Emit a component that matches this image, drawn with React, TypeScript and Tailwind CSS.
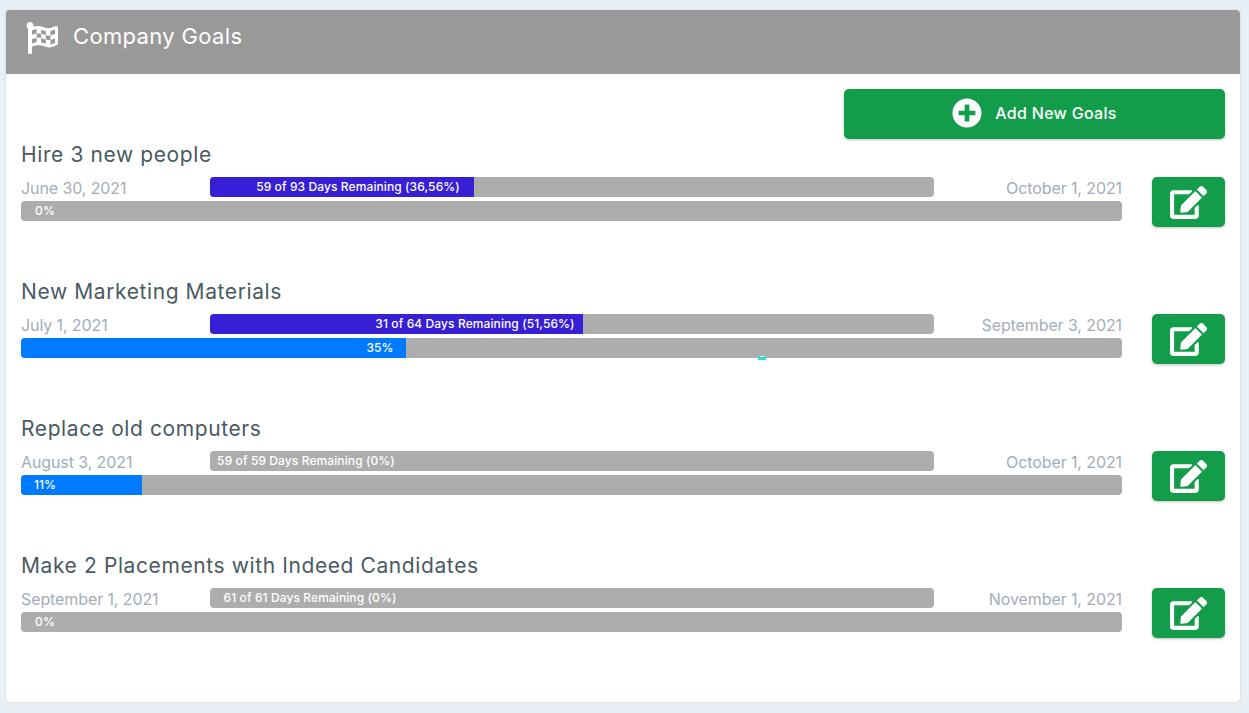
import { FaEdit, FaFlagCheckered, FaPlusCircle } from "react-icons/fa";

type Goal = {
  title: string;
  start: string;
  end: string;
  days: string;
  daysWidth: number;
  daysCenter: number;
  progress: string;
  progressWidth: number;
  progressCenter: number;
  marker?: boolean;
};

const goals: Goal[] = [
  {
    title: "Hire 3 new people",
    start: "June 30, 2021",
    end: "October 1, 2021",
    days: "59 of 93 Days Remaining (36,56%)",
    daysWidth: 264,
    daysCenter: 148,
    progress: "0%",
    progressWidth: 0,
    progressCenter: 24,
  },
  {
    title: "New Marketing Materials",
    start: "July 1, 2021",
    end: "September 3, 2021",
    days: "31 of 64 Days Remaining (51,56%)",
    daysWidth: 373,
    daysCenter: 265,
    progress: "35%",
    progressWidth: 385,
    progressCenter: 359,
    marker: true,
  },
  {
    title: "Replace old computers",
    start: "August 3, 2021",
    end: "October 1, 2021",
    days: "59 of 59 Days Remaining (0%)",
    daysWidth: 0,
    daysCenter: 96,
    progress: "11%",
    progressWidth: 121,
    progressCenter: 24,
  },
  {
    title: "Make 2 Placements with Indeed Candidates",
    start: "September 1, 2021",
    end: "November 1, 2021",
    days: "61 of 61 Days Remaining (0%)",
    daysWidth: 0,
    daysCenter: 100,
    progress: "0%",
    progressWidth: 0,
    progressCenter: 24,
  },
];

// 進捗バー: 塗りとラベルは別要素で、ラベル位置はデータから決める
function Bar({
  fill,
  color,
  label,
  center,
}: {
  fill: number;
  color: string;
  label: string;
  center: number;
}) {
  return (
    <div className="relative h-5 overflow-hidden rounded-[4px] bg-[#adadad]">
      <div className={`h-full ${color}`} style={{ width: fill }} />
      <div
        className="absolute inset-y-0 left-0 flex items-center justify-center whitespace-nowrap text-[12px] font-medium tracking-[0.1px] text-white"
        style={{ width: center * 2 }}
      >
        {label}
      </div>
    </div>
  );
}

function GoalRow({ goal }: { goal: Goal }) {
  return (
    <div className="mb-[51px]">
      <div className="h-9 text-[21px] leading-[28px] tracking-[0.6px] text-[#4a5a62]">{goal.title}</div>
      <div className="flex items-start justify-between">
        <div className="relative w-[1101px]">
          <div className="flex h-5 items-center">
            <div className="w-[189px] pt-0.5 text-[16px] tracking-[-0.1px] text-[#a3adb8]">{goal.start}</div>
            <div className="w-[724px]">
              <Bar fill={goal.daysWidth} color="bg-[#371fd6]" label={goal.days} center={goal.daysCenter} />
            </div>
            <div className="flex-1 pt-0.5 text-right text-[16px] tracking-[-0.1px] text-[#a3adb8]">{goal.end}</div>
          </div>
          <div className="mt-1">
            <Bar fill={goal.progressWidth} color="bg-[#007bff]" label={goal.progress} center={goal.progressCenter} />
          </div>
          {goal.marker && (
            <div className="absolute left-[737px] top-[42px] flex h-1 w-2 justify-center bg-[#2de0d0]">
              <div className="h-px w-1 bg-white" />
            </div>
          )}
        </div>
        <button className="flex h-[50px] w-[73px] items-center justify-center rounded-[5px] bg-[#139c4a] text-white shadow-[0_1px_3px_rgba(0,0,0,0.25)]">
          <FaEdit className="h-[33px] w-[37px]" />
        </button>
      </div>
    </div>
  );
}

export default function App() {
  return (
    <div className="h-[713px] bg-[#e9f0f5] pb-[11px] pl-[6px] pr-[9px] pt-[10px] font-['Inter','Noto_Sans',sans-serif]">
      <div className="h-full overflow-hidden rounded-[4px] bg-white shadow-[0_0_2px_rgba(0,0,0,0.2)]">
        <div className="flex h-16 items-center bg-[#999999] pb-2 pl-5 text-white">
          <FaFlagCheckered className="h-8 w-8" />
          <span className="mb-[3px] ml-[15px] text-[22px] tracking-[0.35px]">Company Goals</span>
        </div>
        <div className="pl-[15px] pr-[15px] pt-[15px]">
          <div className="mb-0.5 flex justify-end">
            <button className="flex h-[50px] w-[381px] items-center justify-center gap-[13px] rounded-[5px] bg-[#139c4a] pb-0.5 text-[16px] font-medium tracking-[0.3px] text-white shadow-[0_1px_3px_rgba(0,0,0,0.25)]">
              <FaPlusCircle className="h-[30px] w-[30px]" />
              Add New Goals
            </button>
          </div>
          {goals.map((goal) => (
            <GoalRow key={goal.title} goal={goal} />
          ))}
        </div>
      </div>
    </div>
  );
}
